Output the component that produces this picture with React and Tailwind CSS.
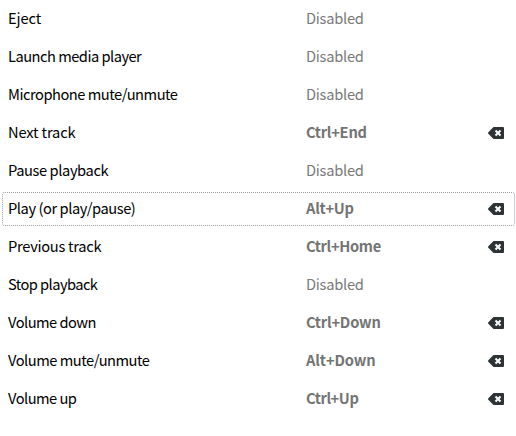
const rows = [
  { name: "Eject", tracking: "tracking-[-0.1px]" },
  { name: "Launch media player", tracking: "tracking-[-0.51px]" },
  { name: "Microphone mute/unmute", tracking: "tracking-[-0.48px]" },
  { name: "Next track", tracking: "tracking-[-0.15px]", shortcut: "Ctrl+End", keyTracking: "tracking-[-0.25px]" },
  { name: "Pause playback", tracking: "tracking-[-0.4px]" },
  { name: "Play (or play/pause)", tracking: "tracking-[-0.43px]", shortcut: "Alt+Up", keyTracking: "tracking-[-0.25px]", focused: true },
  { name: "Previous track", tracking: "tracking-[-0.28px]", shortcut: "Ctrl+Home", keyTracking: "tracking-[-0.33px]" },
  { name: "Stop playback", tracking: "tracking-[-0.56px]" },
  { name: "Volume down", tracking: "tracking-[-0.52px]", shortcut: "Ctrl+Down", keyTracking: "tracking-[-0.2px]" },
  { name: "Volume mute/unmute", tracking: "tracking-[-0.48px]", shortcut: "Alt+Down", keyTracking: "tracking-[-0.1px]" },
  { name: "Volume up", tracking: "tracking-[-0.52px]", shortcut: "Ctrl+Up", keyTracking: "tracking-[-0.4px]" },
];

function ClearIcon() {
  return (
    <svg className="block h-[12px] w-4" viewBox="0 0 16 12" aria-hidden="true">
      <path d="M5.5 0H15a1 1 0 0 1 1 1v10a1 1 0 0 1-1 1H5.5L.3 6.8Q-.2 6 .3 5.2Z" fill="#2e3436" />
      <path d="m7.5 3.5 5 5m0-5-5 5" stroke="white" strokeWidth="2" />
    </svg>
  );
}

export default function App() {
  return (
    <main className="h-[436px] w-[516px] overflow-hidden bg-white font-['Noto_Sans_CJK_SC',sans-serif] text-[14.667px] leading-5 text-black">
      {rows.map(({ name, tracking, shortcut, keyTracking, focused }) => (
        <div key={name} className="h-[38px] py-0.5 pl-0.5 pr-px">
          <div className={`flex h-[34px] items-center rounded-[3px] border border-dotted pl-[5px] ${focused ? "border-[#9c9e9f]" : "border-transparent"}`}>
            <span className={`w-[298px] shrink-0 pb-0.5 ${tracking}`}>{name}</span>
            {shortcut ? (
              <span className={`w-[182px] shrink-0 pb-0.5 font-bold text-[#747474] ${keyTracking}`}>{shortcut}</span>
            ) : (
              <span className="w-[182px] shrink-0 pb-0.5 tracking-[-0.25px] text-[#7a7a7a]">Disabled</span>
            )}
            {shortcut && <button aria-label="Clear shortcut"><ClearIcon /></button>}
          </div>
        </div>
      ))}
    </main>
  );
}
